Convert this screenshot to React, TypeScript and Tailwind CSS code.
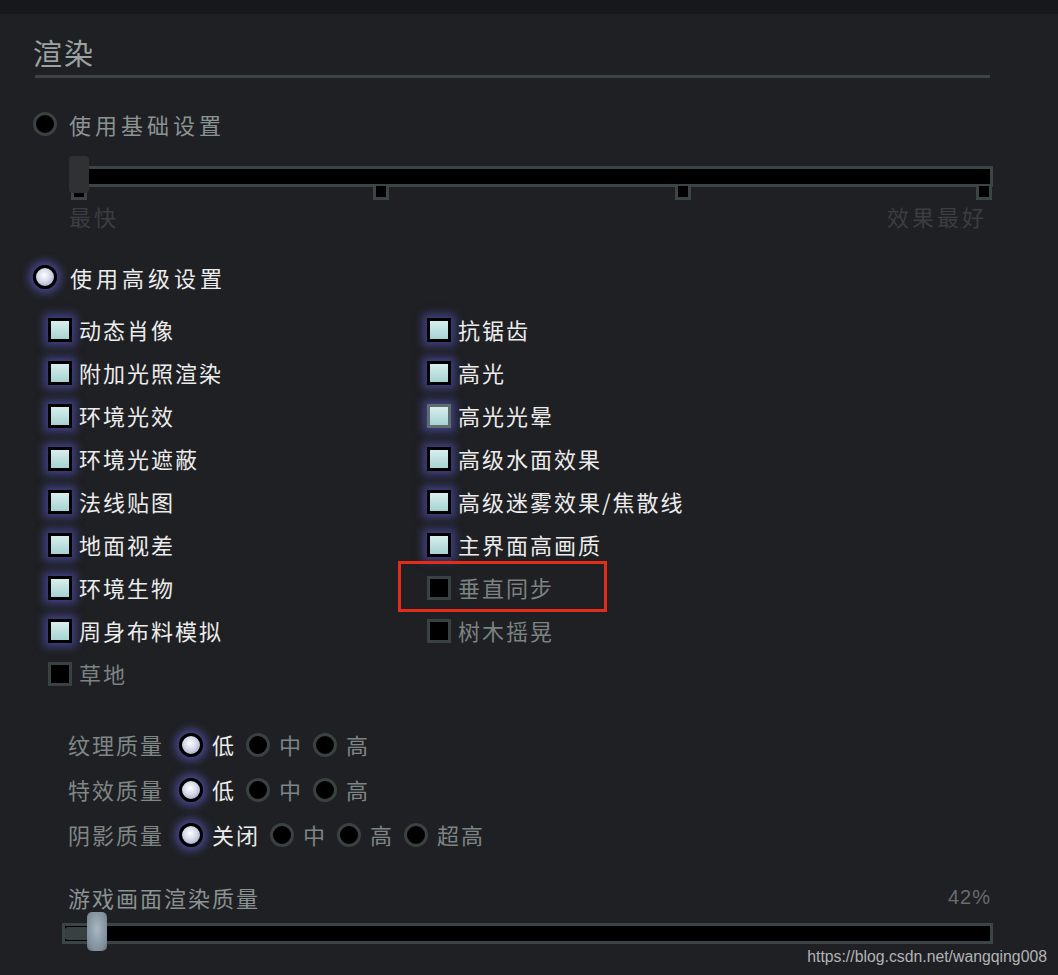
import React from "react";

const CJK = "font-['Noto_Sans_CJK_SC','Noto_Sans',sans-serif]";

function Radio({ on }: { on?: boolean }) {
  return on ? (
    <span className="box-border inline-block h-[24px] w-[24px] shrink-0 rounded-full border-[3px] border-black bg-[radial-gradient(circle_at_45%_40%,#ffffff_0%,#d4d8e8_45%,#8e95b4_100%)] shadow-[0_0_9px_4px_rgba(96,96,215,0.6)]" />
  ) : (
    <span className="box-border inline-block h-[24px] w-[24px] shrink-0 rounded-full border-[3px] border-[#394141] bg-black" />
  );
}

function Check({ label, on, gray }: { label: string; on?: boolean; gray?: boolean }) {
  return (
    <div className="flex h-[43px] items-center">
      {on ? (
        <span
          className={
            "box-border h-[24px] w-[24px] shrink-0 border-[3px] bg-[linear-gradient(#d8eeee,#a6d2d2)] shadow-[0_0_8px_4px_rgba(90,90,205,0.55)] " +
            (gray ? "border-[#5f6d6d]" : "border-black")
          }
        />
      ) : (
        <span className="box-border h-[24px] w-[24px] shrink-0 border-[3px] border-[#394242] bg-black" />
      )}
      <span className={"ml-[7px] text-[22px] tracking-[2px] " + (on ? "text-[#ececec]" : "text-[#7b8383]")}>
        {label}
      </span>
    </div>
  );
}

function QualityRow({ label, options }: { label: string; options: string[] }) {
  return (
    <div className="flex h-[45px] items-center">
      <span className="text-[22px] tracking-[2px] text-[#7f8787]">{label}</span>
      <div className="ml-[15px] flex items-center">
        {options.map((o, i) => (
          <div key={o} className="mr-[10px] flex items-center">
            <Radio on={i === 0} />
            <span className={"ml-[9px] text-[22px] tracking-[2px] " + (i === 0 ? "text-[#ececec]" : "text-[#7d8585]")}>{o}</span>
          </div>
        ))}
      </div>
    </div>
  );
}

export default function App() {
  const left = ["动态肖像", "附加光照渲染", "环境光效", "环境光遮蔽", "法线贴图", "地面视差", "环境生物", "周身布料模拟"];
  const right = ["抗锯齿", "高光", "高光光晕", "高级水面效果", "高级迷雾效果/焦散线", "主界面高画质"];

  return (
    <div className={"relative h-[975px] w-[1058px] overflow-hidden bg-[#1f2023] " + CJK}>
      <div className="h-[14px] bg-[#17181a]" />
      <div className="pl-[33px] pr-[65px] pt-[21px]">
        {/* header */}
        <div className="flex h-[36px] items-center text-[29px] tracking-[2px] text-[#9aa2a2]">渲染</div>
        <div className="ml-[2px] mr-[3px] mt-[4px] h-[3px] bg-[#3d4444]" />

        {/* basic */}
        <div className="mt-[31px] flex h-[30px] items-center">
          <Radio />
          <span className="ml-[12px] text-[22px] tracking-[4px] text-[#8b9393]">使用基础设置</span>
        </div>

        <div className="relative ml-[36px] mt-[17px] h-[44px]">
          <div className="absolute left-0 right-0 top-[10px] box-border h-[21px] border-[3px] border-[#3b4545] bg-black" />
          {[2, 304, 606, 907].map((x) => (
            <div
              key={x}
              className="absolute top-[30px] box-border h-[14px] w-[16px] border-[3px] border-t-0 border-[#3b4545] bg-black"
              style={{ left: x }}
            />
          ))}
          <div className="absolute left-0 top-0 h-[37px] w-[20px] rounded-[4px] bg-[#303132]" />
        </div>
        <div className="ml-[36px] mt-[3px] flex h-[26px] items-center justify-between pr-[6px] text-[22px] tracking-[3px] text-[#3a3e40]">
          <span>最快</span>
          <span>效果最好</span>
        </div>

        {/* advanced */}
        <div className="mt-[33px] flex h-[30px] items-center">
          <Radio on />
          <span className="ml-[13px] text-[22px] tracking-[4px] text-[#ececec]">使用高级设置</span>
        </div>

        <div className="ml-[15px] mt-[16px] grid grid-cols-[379px_1fr]">
          <div>
            {left.map((l) => (
              <Check key={l} label={l} on />
            ))}
            <Check label="草地" />
          </div>
          <div>
            {right.map((l) => (
              <Check key={l} label={l} on gray={l === "高光光晕"} />
            ))}
            <div className="relative">
              <Check label="垂直同步" />
              <div className="absolute -left-[29px] top-[-5px] h-[51px] w-[209px] border-[3px] border-[#e52c1b]" />
            </div>
            <Check label="树木摇晃" />
          </div>
        </div>

        {/* quality */}
        <div className="ml-[35px] mt-[27px]">
          <QualityRow label="纹理质量" options={["低", "中", "高"]} />
          <QualityRow label="特效质量" options={["低", "中", "高"]} />
          <QualityRow label="阴影质量" options={["关闭", "中", "高", "超高"]} />
        </div>

        <div className="ml-[35px] mt-[27px] flex h-[26px] items-center justify-between pr-[2px]">
          <span className="text-[22px] tracking-[2px] text-[#8a9292]">游戏画面渲染质量</span>
          <span className="font-['Liberation_Sans',sans-serif] text-[20px] tracking-[1px] text-[#666d6f]">42%</span>
        </div>
        <div className="relative ml-[29px] mt-[2px] h-[39px]">
          <div className="absolute left-0 right-0 top-[11px] box-border h-[21px] border-[3px] border-[#3b4545] bg-black" />
          <div className="absolute left-[3px] top-[15px] h-[13px] w-[24px] rounded-l-[3px] bg-[#394040]" />
          <div className="absolute left-[25px] top-0 h-[39px] w-[20px] rounded-[5px] bg-[radial-gradient(ellipse_at_50%_45%,#a9b7c2_0%,#7f8f9b_70%,#5d6b75_100%)]" />
        </div>
      </div>

      <div className="absolute right-[11px] top-[945px] font-['Liberation_Sans',sans-serif] text-[15.8px] text-[#b2b4b6]">
        https://blog.csdn.net/wangqing008
      </div>
    </div>
  );
}
